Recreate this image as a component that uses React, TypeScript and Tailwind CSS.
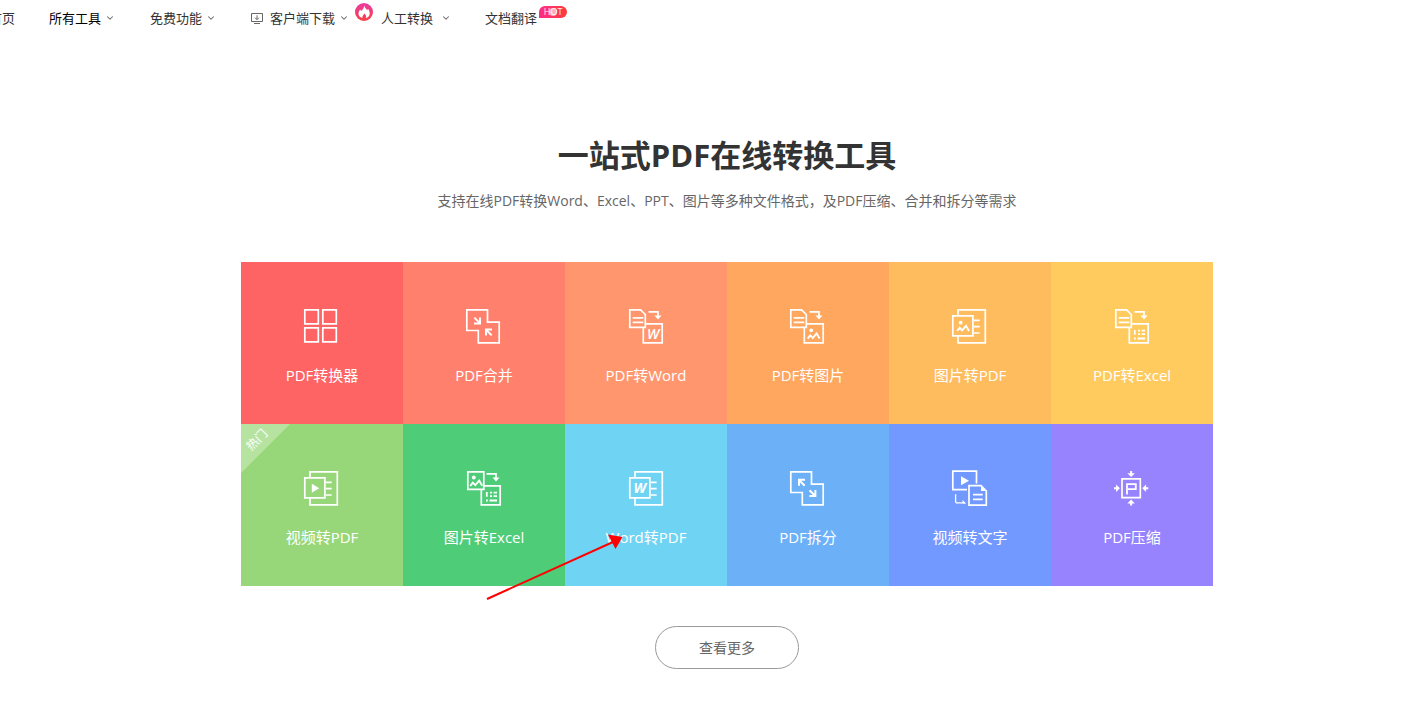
import React from "react";
import { ChevronDown } from "lucide-react";

interface Tool {
  name: string;
  bg: string;
  icon: React.ReactNode;
  hot?: boolean;
  pointed?: boolean;
}

/* ----------------------------- Icon parts ----------------------------- */

const Letter = ({ x, y, weight = "bold", children }: { x: number; y: number; weight?: string; children: string }) => (
  <text
    x={x}
    y={y}
    fill="currentColor"
    stroke="none"
    textAnchor="middle"
    fontSize="14"
    fontWeight={weight}
    fontStyle="italic"
    fontFamily="Open Sans, sans-serif"
  >
    {children}
  </text>
);

const Picture = ({ x, y }: { x: number; y: number }) => (
  <g transform={`translate(${x} ${y})`}>
    <circle cx="3.8" cy="1.7" r="1.9" fill="currentColor" stroke="none" />
    <path d="M.3 10 2.8 6.8 5.3 9.4 9.2 4.8 12.2 10" strokeWidth="1.9" />
  </g>
);

const Cells = () => (
  <path d="M20.8 22v4.8M24 22.7h2M27.5 22.7H31M24 26.2h2M27.5 26.2H31M20 30.5h1.8M23.5 30.5h7.5" strokeWidth="1.8" />
);

// small document, arrow and target box
const Convert = ({ picture, children }: { picture?: boolean; children: React.ReactNode }) => (
  <>
    {picture ? (
      <>
        <path d="M1.8 1.8H17.8V19.3H1.8Z" />
        <Picture x={4} y={5.8} />
      </>
    ) : (
      <path d="M1.8 1.8H12.6L17.3 6.5V19.3H1.8ZM4.7 9.8h10.6M4.7 14.3h10.6" />
    )}
    <path d="M20.5 3.8H30V9" />
    <path d="M26.5 7.5H33.5L30 11.5Z" fill="currentColor" stroke="none" />
    <path d="M15.3 19.3V34.8H34.2V15.8H17.3" />
    {children}
  </>
);

// page with ruled lines behind a front box
const IntoPdf = ({ children }: { children: React.ReactNode }) => (
  <>
    <path d="M6 7.8V1.8H33.3V34.8H6V28M21.7 12.3h6M21.7 18.7h6M21.7 25h6" />
    <path d="M.8 7.9H20.9V27.9H.8Z" />
    {children}
  </>
);

const Overlap = ({ arrows }: { arrows: string }) => (
  <>
    <path d="M.8 1.8H21.5V14.2H33.2V34.8H12.3V22.5H.8Z" />
    <path d={arrows} strokeWidth="2" />
  </>
);

const tools: Tool[] = [
  {
    name: "PDF转换器",
    bg: "bg-[#ff6464]",
    icon: <path d="M.8 1.8H14.3V15.8H.8ZM18.8 1.8H32.3V15.8H18.8ZM.8 19.8H14.3V33.8H.8ZM18.8 19.8H32.3V33.8H18.8Z" />,
  },
  {
    name: "PDF合并",
    bg: "bg-[#ff816d]",
    icon: <Overlap arrows="M8.3 9.6l5.8 5.8M14 9.6v5.9H8M25.7 27.4l-5.8-5.8M20 27.4v-5.9h6" />,
  },
  {
    name: "PDF转Word",
    bg: "bg-[#ff966d]",
    icon: <Convert><Letter x={25} y={30.5} weight="600">W</Letter></Convert>,
  },
  {
    name: "PDF转图片",
    bg: "bg-[#ffa65f]",
    icon: <g transform="translate(-1 0)"><Convert><Picture x={18.4} y={20.6} /></Convert></g>,
  },
  {
    name: "图片转PDF",
    bg: "bg-[#ffbc5e]",
    icon: <IntoPdf><Picture x={4.8} y={13} /></IntoPdf>,
  },
  {
    name: "PDF转Excel",
    bg: "bg-[#ffcb5e]",
    icon: <Convert><Cells /></Convert>,
  },
  {
    name: "视频转PDF",
    bg: "bg-[#98d779]",
    hot: true,
    icon: <IntoPdf><path d="M7.8 13.8 15.3 18.3 7.8 22.8Z" fill="currentColor" stroke="none" /></IntoPdf>,
  },
  {
    name: "图片转Excel",
    bg: "bg-[#4ecc78]",
    icon: <Convert picture><Cells /></Convert>,
  },
  {
    name: "Word转PDF",
    bg: "bg-[#6fd3f4]",
    pointed: true,
    icon: <g transform="translate(1 0)"><IntoPdf><Letter x={10.8} y={23}>W</Letter></IntoPdf></g>,
  },
  {
    name: "PDF拆分",
    bg: "bg-[#6cb0f7]",
    icon: <Overlap arrows="M14.7 15.7l-5.8-5.8M9 15.7V9.8h6M19.5 20.2l5.8 5.8M25.4 20v6h-6" />,
  },
  {
    name: "视频转文字",
    bg: "bg-[#7299ff]",
    icon: (
      <>
        <path d="M24.5 13.5V1.1H.8V19.6H15M17 15.7H29L34.3 21V35.2H17ZM21 24.7h9.7M21 29.3h9.7" />
        <path d="M3.6 24.3V32L4.4 32.8H13" strokeWidth="1.3" />
        <path d="M9 6.3 17 10.8 9 15.3ZM29 15.3V21H34.5ZM10.5 30 14.2 33.4H10.5Z" fill="currentColor" stroke="none" />
      </>
    ),
  },
  {
    name: "PDF压缩",
    bg: "bg-[#9883ff]",
    icon: (
      <>
        <path d="M8 8.8H26.3V27.6H8Z" />
        <path d="M13 24.5V14.2H21.8V19.2H14" strokeWidth="1.8" />
        <path d="M17.1 1V4M17.1 35.5V32M0 18.3H3M34.3 18.3H31" strokeWidth="2" />
        <path
          d="M13.4 3.2H20.8L17.1 7ZM13.4 33.4H20.8L17.1 29.6ZM2.1 14.6V22L5.9 18.3ZM32.1 14.6V22L28.3 18.3Z"
          fill="currentColor"
          stroke="none"
        />
      </>
    ),
  },
];

/* ----------------------------- Navigation ----------------------------- */

const Chevron = () => <ChevronDown className="size-2.5 text-[#666]" strokeWidth={2.5} />;

const Flame = () => (
  <svg className="absolute -left-7 -top-1.5 size-5" viewBox="0 0 20 20" aria-hidden="true">
    <defs>
      <linearGradient id="flame" x1="0" y1="0" x2="0" y2="1">
        <stop offset="0" stopColor="#e93aa4" />
        <stop offset="1" stopColor="#fb4145" />
      </linearGradient>
    </defs>
    <circle cx="11" cy="10" r="9" fill="url(#flame)" />
    <path
      d="M11.3 3.4C11.6 6.2 14 7 14.2 8.3 14.7 7.9 14.8 7.4 14.9 6.8 16.3 8.6 17.1 10.5 16.6 12.4 16.1 14.6 14.3 15.7 12.8 16 13.7 14.3 12.8 12.7 11.2 11.2 11 13 8.8 13.7 9.6 16 7.5 15.5 5.7 14.2 5.5 11.9 5.3 9.8 6.6 8.8 7 7.4 7.6 7.9 7.9 8.3 8.1 8.9 9.7 7.7 11 5.8 11.3 3.4Z"
      fill="#fff"
    />
  </svg>
);

function NavBar() {
  return (
    <nav className="-ml-[11px] flex h-9 items-center whitespace-nowrap text-[13px] leading-5 text-[#333]">
      <a href="#home">首页</a>
      <a href="#tools" className="ml-[34px] flex items-center gap-1 text-black">
        所有工具
        <Chevron />
      </a>
      <a href="#free" className="ml-[35px] flex items-center gap-1">
        免费功能
        <Chevron />
      </a>
      <a href="#client" className="ml-[34px] flex items-center gap-1">
        <svg className="mr-0.5 size-3.5" viewBox="0 0 14 14" fill="none" stroke="#666" aria-hidden="true">
          <path d="M1.5 2.5H12.5V10.5H1.5ZM4 12.5H10M7 4.3V8.5M5 6.7 7 8.7 9 6.7" />
        </svg>
        客户端下载
        <Chevron />
      </a>
      <a href="#manual" className="relative ml-8 flex items-center gap-2">
        <Flame />
        人工转换
        <Chevron />
      </a>
      <a href="#translate" className="relative ml-[34px]">
        文档翻译
        <span className="absolute -top-0.5 left-full ml-0.5 flex h-3 w-7 items-center justify-center rounded-r-full rounded-tl-full bg-linear-to-r from-[#fb2c86] to-[#fd3a34] text-[9px] text-white/90">
          <span className="absolute size-2 rounded-full bg-white/60" />
          HOT
        </span>
      </a>
    </nav>
  );
}

/* ----------------------------- Tool tile ----------------------------- */

function ToolTile({ name, bg, icon, hot, pointed }: Tool) {
  return (
    <a
      href="#convert"
      className={`relative flex aspect-square flex-col items-center justify-center gap-[21px] text-[15px] leading-5 text-white ${bg} ${pointed ? "z-10" : ""}`}
    >
      <svg
        className="mt-[7px] size-9 overflow-visible"
        viewBox="0 0 36 36"
        fill="none"
        stroke="currentColor"
        strokeWidth="1.7"
        aria-hidden="true"
      >
        {icon}
      </svg>
      <span>{name}</span>
      {hot && (
        <span className="absolute left-0 top-0 size-[49px] bg-white/30 [clip-path:polygon(0_0,100%_0,0_100%)]">
          <span className="absolute left-1 top-2 -rotate-45 text-xs leading-4">热门</span>
        </span>
      )}
      {pointed && (
        <svg className="absolute -left-20 top-[108px] h-[72px] w-[140px]" viewBox="0 0 140 72" aria-hidden="true">
          <path d="M2 67 128 10" stroke="#f00" strokeWidth="2" />
          <path d="M137.5 5 123 2.5 130.5 17Z" fill="#f00" />
        </svg>
      )}
    </a>
  );
}

export default function App() {
  return (
    <div className="min-h-screen overflow-hidden bg-white font-['Open_Sans','Noto_Sans_CJK_SC',sans-serif]">
      <NavBar />
      <main className="flex flex-col items-center pb-8 pl-[47px] pt-[99px]">
        <h1 className="text-[31px] font-bold leading-10 text-[#333]">一站式PDF在线转换工具</h1>
        <p className="mt-3.5 text-sm leading-6 text-[#666]">
          支持在线PDF转换Word、Excel、PPT、图片等多种文件格式，及PDF压缩、合并和拆分等需求
        </p>
        <div className="mt-[49px] grid w-full max-w-[972px] grid-cols-6">
          {tools.map((tool) => (
            <ToolTile key={tool.name} {...tool} />
          ))}
        </div>
        <button type="button" className="mt-10 rounded-full border border-[#999] px-[43px] py-2.5 text-sm leading-[21px] text-[#666]">
          查看更多
        </button>
      </main>
    </div>
  );
}
